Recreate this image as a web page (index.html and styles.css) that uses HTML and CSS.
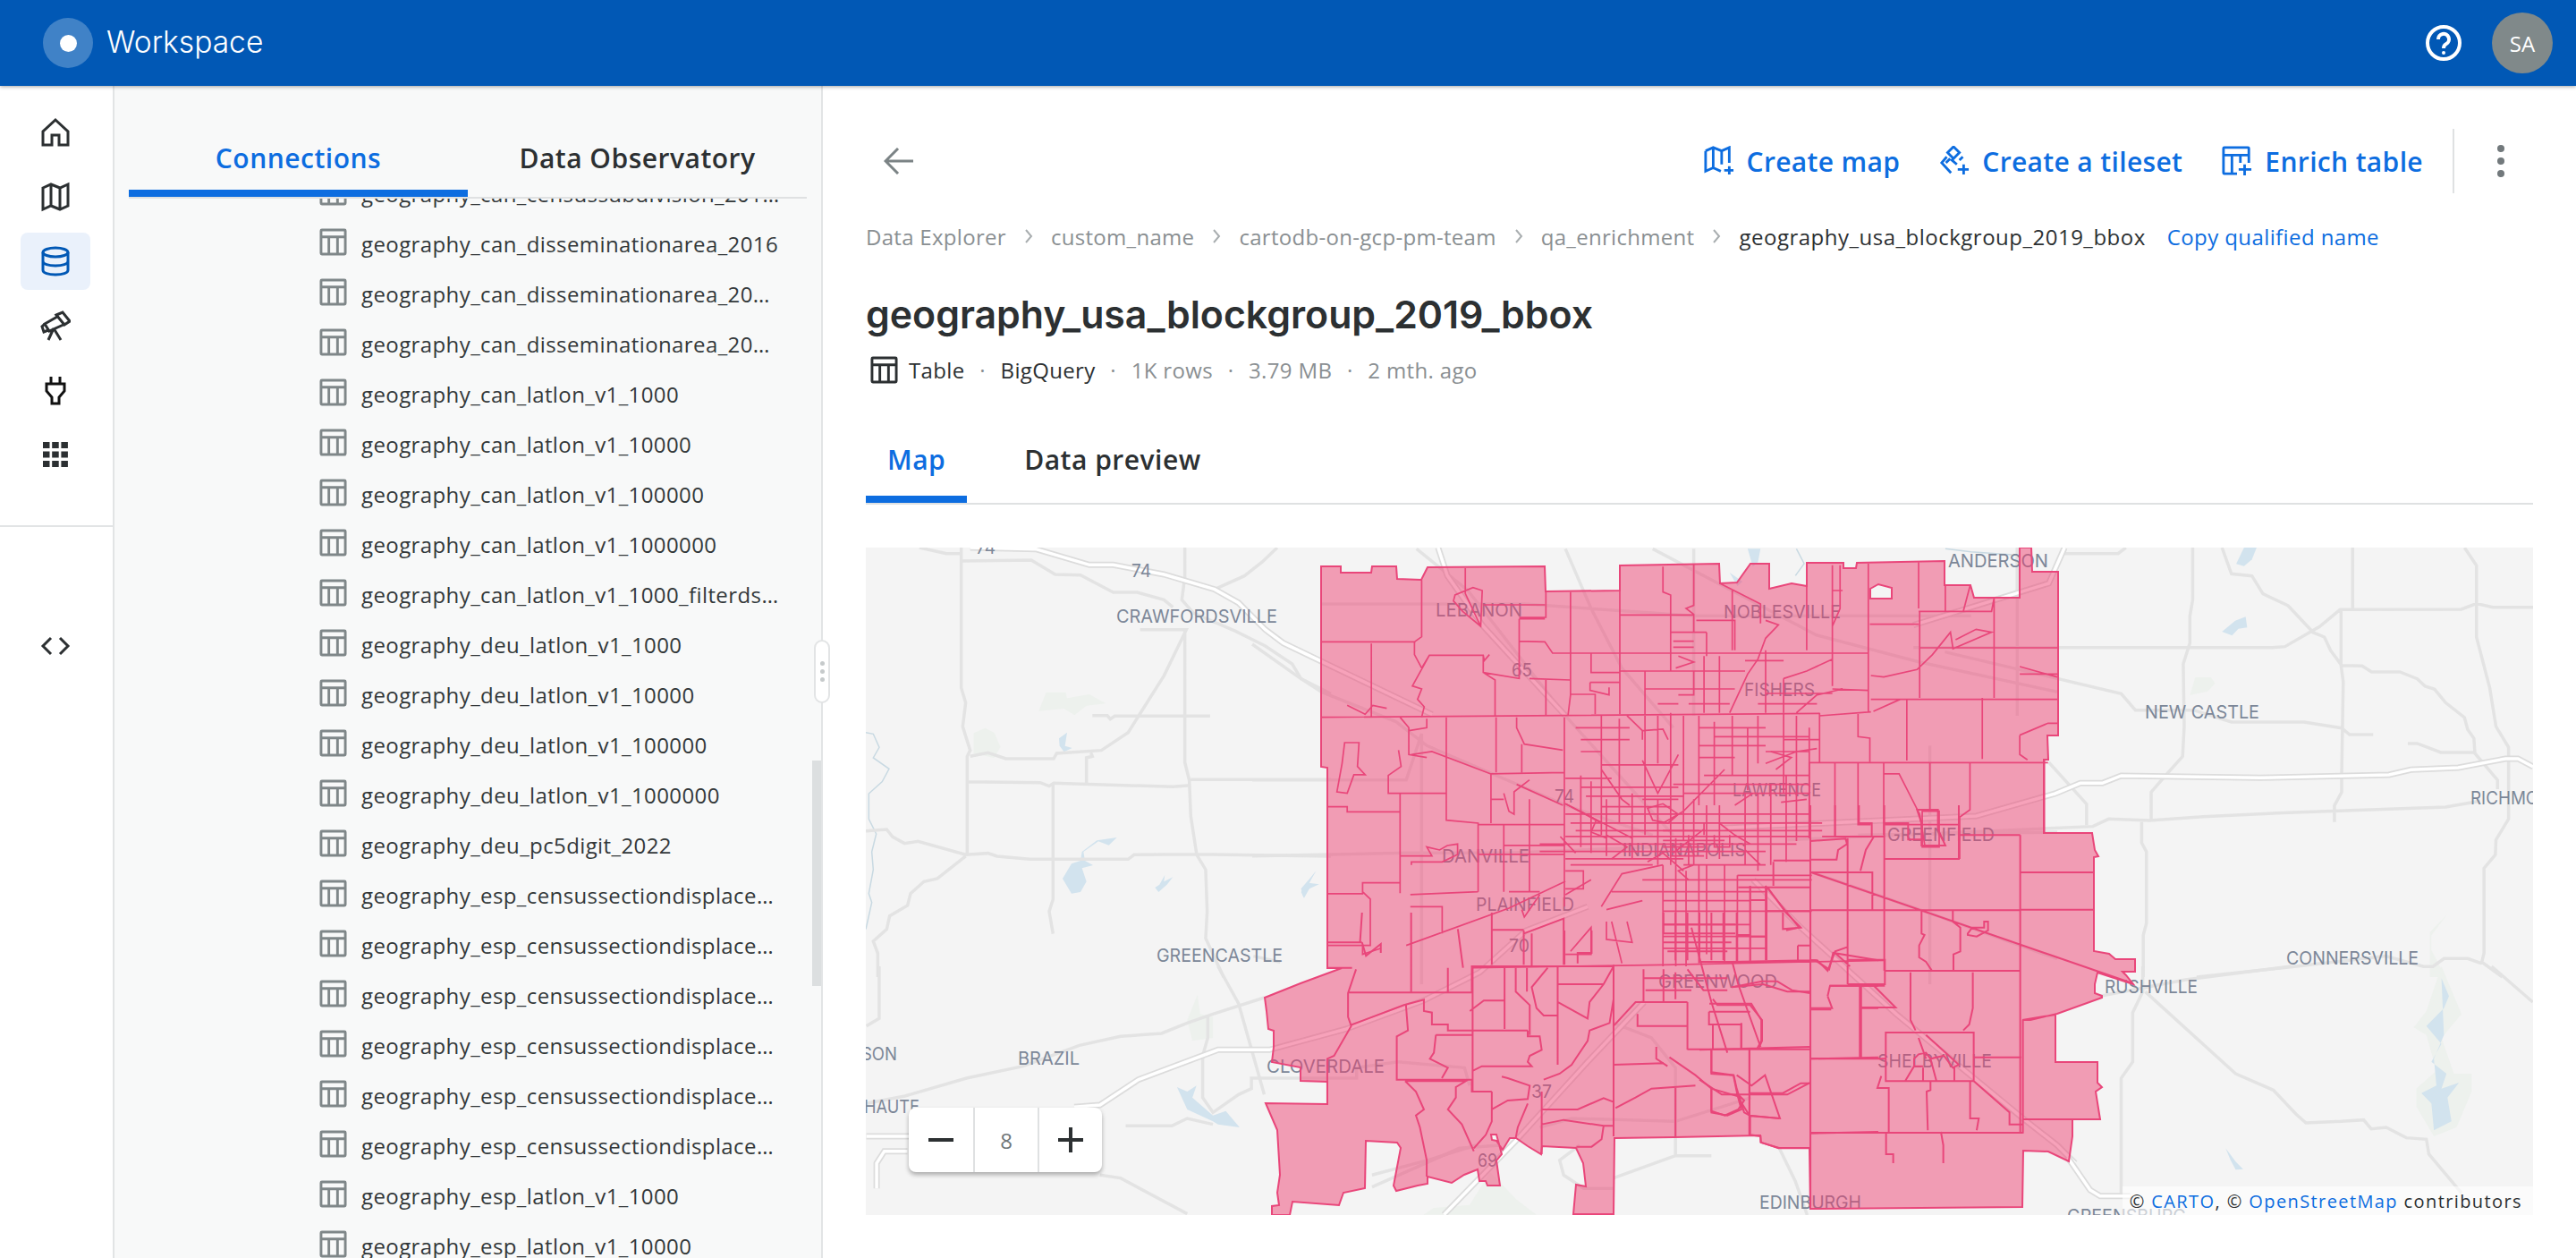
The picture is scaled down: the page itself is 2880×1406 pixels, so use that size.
FILE: index.html
```html
<!DOCTYPE html>
<html lang="en">

<head>
    <meta charset="UTF-8" />
    <title>Workspace :: Data Explorer</title>
    <link rel="stylesheet" href="styles.css">
</head>

<body>
    <svg class="defs" width="0" height="0">
        <symbol id="ic-table" viewBox="0 0 32 32">
            <path d="M3 2H29A1 1 0 0 1 30 3V29A1 1 0 0 1 29 30H3A1 1 0 0 1 2 29V3A1 1 0 0 1 3 2ZM2 10H30M11 10V30M21 10V30" />
        </symbol>
    </svg>

    <header class="top-header">
        <div class="logo"><span class="logo-dot"></span></div>
        <div class="app-name">Workspace</div>
        <div class="header-right">
            <svg class="help" viewBox="0 0 40 40">
                <circle cx="20" cy="20" r="18" />
                <path d="M14 16A6 6 0 1 1 23 21C21 22 20 23 20 26" />
                <circle class="help-dot" cx="20" cy="31" r="2" />
            </svg>
            <div class="avatar">SA</div>
        </div>
    </header>

    <div class="app">
        <nav class="rail">
            <div class="rail-main">
                <div class="rail-item">
                    <svg class="rail-icon" viewBox="0 0 34 34"><path d="M17 3L31 16V31H21V20H13V31H3V16Z" /></svg>
                </div>
                <div class="rail-item">
                    <svg class="rail-icon" viewBox="0 0 34 34"><path d="M3 7L12 3L22 7L31 3V27L22 31L12 27L3 31ZM12 3V27M22 7V31" /></svg>
                </div>
                <div class="rail-item active">
                    <svg class="rail-icon" viewBox="0 0 34 34"><ellipse cx="17" cy="7" rx="14" ry="5" /><path d="M3 7V27C3 30 9 32 17 32S31 30 31 27V7M3 17C3 20 9 22 17 22S31 20 31 17" /></svg>
                </div>
                <div class="rail-item">
                    <svg class="rail-icon" viewBox="0 0 34 34"><path d="M18 5L25 2L33 12L27 16ZM19 7L5 15L10 23L28 15M5 15L2 18L4 24L9 22M15 20L9 33M15 20L23 33" /></svg>
                </div>
                <div class="rail-item">
                    <svg class="rail-icon plug" viewBox="0 0 34 34"><path d="M12 2V10M22 2V10M7 10H27V18L21 25V32H13V25L7 18Z" /></svg>
                </div>
                <div class="rail-item">
                    <svg class="rail-icon grid-icon" viewBox="0 0 28 28">
                        <rect x="0" y="0" width="7.5" height="7" /><rect x="10.2" y="0" width="7.5" height="7" /><rect x="20.4" y="0" width="7.5" height="7" />
                        <rect x="0" y="10.5" width="7.5" height="7" /><rect x="10.2" y="10.5" width="7.5" height="7" /><rect x="20.4" y="10.5" width="7.5" height="7" />
                        <rect x="0" y="21" width="7.5" height="7" /><rect x="10.2" y="21" width="7.5" height="7" /><rect x="20.4" y="21" width="7.5" height="7" />
                    </svg>
                </div>
            </div>
            <div class="rail-bottom">
                <div class="rail-item">
                    <svg class="code-icon" viewBox="0 0 34 22"><path d="M12 2L3 11L12 20M22 2L31 11L22 20" /></svg>
                </div>
            </div>
        </nav>

        <aside class="sidebar">
            <div class="side-tabs">
                <div class="side-tab active">Connections</div>
                <div class="side-tab">Data Observatory</div>
            </div>
            <div class="side-list">
                <div class="rows">
                    <div class="row"><svg class="row-icon"><use href="#ic-table" /></svg><span class="row-name">geography_can_censussubdivision_2016_clipped</span></div>
                    <div class="row"><svg class="row-icon"><use href="#ic-table" /></svg><span class="row-name">geography_can_disseminationarea_2016</span></div>
                    <div class="row"><svg class="row-icon"><use href="#ic-table" /></svg><span class="row-name">geography_can_disseminationarea_2016_clipped</span></div>
                    <div class="row"><svg class="row-icon"><use href="#ic-table" /></svg><span class="row-name">geography_can_disseminationarea_2021_clipped</span></div>
                    <div class="row"><svg class="row-icon"><use href="#ic-table" /></svg><span class="row-name">geography_can_latlon_v1_1000</span></div>
                    <div class="row"><svg class="row-icon"><use href="#ic-table" /></svg><span class="row-name">geography_can_latlon_v1_10000</span></div>
                    <div class="row"><svg class="row-icon"><use href="#ic-table" /></svg><span class="row-name">geography_can_latlon_v1_100000</span></div>
                    <div class="row"><svg class="row-icon"><use href="#ic-table" /></svg><span class="row-name">geography_can_latlon_v1_1000000</span></div>
                    <div class="row"><svg class="row-icon"><use href="#ic-table" /></svg><span class="row-name">geography_can_latlon_v1_1000_filterdsample</span></div>
                    <div class="row"><svg class="row-icon"><use href="#ic-table" /></svg><span class="row-name">geography_deu_latlon_v1_1000</span></div>
                    <div class="row"><svg class="row-icon"><use href="#ic-table" /></svg><span class="row-name">geography_deu_latlon_v1_10000</span></div>
                    <div class="row"><svg class="row-icon"><use href="#ic-table" /></svg><span class="row-name">geography_deu_latlon_v1_100000</span></div>
                    <div class="row"><svg class="row-icon"><use href="#ic-table" /></svg><span class="row-name">geography_deu_latlon_v1_1000000</span></div>
                    <div class="row"><svg class="row-icon"><use href="#ic-table" /></svg><span class="row-name">geography_deu_pc5digit_2022</span></div>
                    <div class="row"><svg class="row-icon"><use href="#ic-table" /></svg><span class="row-name">geography_esp_censussectiondisplaced_2001_a</span></div>
                    <div class="row"><svg class="row-icon"><use href="#ic-table" /></svg><span class="row-name">geography_esp_censussectiondisplaced_2011_b</span></div>
                    <div class="row"><svg class="row-icon"><use href="#ic-table" /></svg><span class="row-name">geography_esp_censussectiondisplaced_2011_c</span></div>
                    <div class="row"><svg class="row-icon"><use href="#ic-table" /></svg><span class="row-name">geography_esp_censussectiondisplaced_2020_d</span></div>
                    <div class="row"><svg class="row-icon"><use href="#ic-table" /></svg><span class="row-name">geography_esp_censussectiondisplaced_2020_e</span></div>
                    <div class="row"><svg class="row-icon"><use href="#ic-table" /></svg><span class="row-name">geography_esp_censussectiondisplaced_2021_f</span></div>
                    <div class="row"><svg class="row-icon"><use href="#ic-table" /></svg><span class="row-name">geography_esp_latlon_v1_1000</span></div>
                    <div class="row"><svg class="row-icon"><use href="#ic-table" /></svg><span class="row-name">geography_esp_latlon_v1_10000</span></div>
                </div>
            </div>
            <div class="side-scroll"></div>
            <div class="resizer"><span></span><span></span><span></span></div>
        </aside>

        <main class="main">
            <div class="main-top">
                <svg class="back" viewBox="0 0 34 30"><path d="M33 15H3M16 1L2 15L16 29" /></svg>
                <div class="actions">
                    <div class="action">
                        <svg class="action-icon" viewBox="0 0 36 36"><path d="M2 6L11 2L21 6L30 2V20M2 6V30L11 26L20 30M11 2V26M21 6V22M30 24V34M24 29H35" /></svg>
                        Create map
                    </div>
                    <div class="action">
                        <svg class="action-icon" viewBox="0 0 36 36"><path d="M17 1L24 8L17 15L10 8ZM9 13L3 20L14 32M14 16L21 22M28 13L24 17M29 22V34M22 28H35M8 20L13 15" /></svg>
                        Create a tileset
                    </div>
                    <div class="action">
                        <svg class="action-icon" viewBox="0 0 36 36"><path d="M18 33H3A1 1 0 0 1 2 32V3A1 1 0 0 1 3 2H31A1 1 0 0 1 32 3V20M2 11H32M12 11V33M22 11V20M27 22V35M20 28H35" /></svg>
                        Enrich table
                    </div>
                    <div class="actions-sep"></div>
                    <div class="more"><span></span><span></span><span></span></div>
                </div>
            </div>

            <div class="crumbs">
                <span class="crumb">Data Explorer</span>
                <svg class="crumb-sep" viewBox="0 0 10 18"><path d="M2 2L8 9L2 16" /></svg>
                <span class="crumb">custom_name</span>
                <svg class="crumb-sep" viewBox="0 0 10 18"><path d="M2 2L8 9L2 16" /></svg>
                <span class="crumb">cartodb-on-gcp-pm-team</span>
                <svg class="crumb-sep" viewBox="0 0 10 18"><path d="M2 2L8 9L2 16" /></svg>
                <span class="crumb">qa_enrichment</span>
                <svg class="crumb-sep" viewBox="0 0 10 18"><path d="M2 2L8 9L2 16" /></svg>
                <span class="crumb current">geography_usa_blockgroup_2019_bbox</span>
                <span class="copy-name">Copy qualified name</span>
            </div>

            <h1 class="title">geography_usa_blockgroup_2019_bbox</h1>

            <div class="meta">
                <svg class="meta-icon"><use href="#ic-table" /></svg>
                <span class="meta-dark">Table</span><span class="meta-dot">·</span>
                <span class="meta-dark">BigQuery</span><span class="meta-dot">·</span>
                <span>1K rows</span><span class="meta-dot">·</span>
                <span>3.79 MB</span><span class="meta-dot">·</span>
                <span>2 mth. ago</span>
            </div>

            <div class="tabs">
                <div class="tab active">Map</div>
                <div class="tab">Data preview</div>
            </div>

            <div class="map-box">
                <svg class="map" viewBox="968 612 1864 746" width="1864" height="746">
                    <!-- green + water -->
                    <g transform="translate(968 612) scale(.3333)">
                        <path class="park" d="M605 485H670L675 505L750 492L805 523L740 530L700 562L665 540L580 548Z" />
                        <path class="park" d="M362 622L400 605L430 620L452 668L430 705L362 690Z" />
                        <path class="lake" d="M648 640L675 620L668 665L692 672L665 685L650 665Z" />
                        <path class="lake" d="M842 972L815 998L780 985L730 1020L735 1050L762 1065L725 1075L740 1120L720 1155L690 1160L660 1110L690 1060L720 1050L725 1020L775 982Z" />
                        <path class="lake" d="M1030 1105L1000 1120L1003 1098L985 1130L970 1140L982 1155L1010 1130Z" />
                        <path class="lake" d="M1508 1085L1485 1130L1520 1128L1490 1140L1470 1175L1460 1155Z" />
                        <path class="river" d="M0 620L25 625L45 670L25 705L78 742L55 785L10 825V910L35 960L20 1020L25 1080L10 1160L20 1190L0 1280" />
                    </g>
                    <g transform="translate(2280 612) scale(.3521 .3333)">
                        <path class="park" d="M495 435H545L558 455L535 482L478 495Z" />
                        <path class="park" d="M1295 1230L1245 1300V1350L1290 1440L1240 1440V1290Z" />
                        <path class="lake" d="M580 282L622 245L655 232L660 268L632 272L612 295Z" />
                        <path class="lake" d="M625 55L650 0H690L675 40L650 62Z" />
                    </g>
                    <g transform="translate(2000 1080) scale(.5612 .3333)">
                        <path class="park" d="M1300 0L1340 160L1300 240L1325 360H1360V420L1330 540L1285 570L1250 470V410L1290 350L1270 230L1245 205L1270 150Z" />
                        <path class="lake" d="M1300 40L1315 100L1305 140L1270 200L1300 260L1280 320L1310 360L1300 410L1335 390L1312 440L1320 520L1285 550L1280 460L1260 425L1290 400L1285 310L1305 230Z" />
                        <path class="lake" d="M870 610L890 655L905 680L890 682L880 650Z" />
                    </g>
                    <g transform="translate(960 1080) scale(.574 .3333)">
                        <path class="park" d="M640 180L660 95L665 160L690 170V240L650 250Z" />
                        <path class="lake" d="M620 405L640 420L658 400L650 440L690 500L715 485L742 540L700 530L690 520L640 480Z" />
                        <path class="park" d="M1100 833L1120 810L1190 800L1230 690L1280 780L1320 833Z" />
                    </g>
                    <g transform="translate(1400 600) scale(.574 .3333)">
                        <path class="lake" d="M965 40L990 40L985 85L975 100ZM930 120L955 150L945 165Z" />
                        <path class="river" d="M1060 40L1075 90L1058 130M1350 40L1400 50L1480 60" />
                        <path class="lake" d="M125 1120L110 1160L130 1165L105 1185L100 1210L95 1180Z" />
                    </g>

                    <!-- roads -->
                    <g class="roads" transform="translate(968 612) scale(.3333)">
                        <path d="M180 0L270 20H320M320 0V470L335 520L325 600L350 680L340 700V1030M320 45L555 42L635 90L720 92L830 150H910L1000 175L1030 200M1070 0V100L1060 175L1100 220L1240 280L1340 330L1430 390L1460 440L1560 490M1070 270V720L1085 780L1090 900L1110 1030L1140 1080L1145 1220L1140 1310L1200 1440M920 275H1075L1000 430L880 620L790 680L640 690L630 708H470L410 688L350 700M760 563H810L820 575L835 565H1155M740 790V705L760 700L755 688M335 785L585 788L615 800L630 790L1030 802L1090 797M1090 778H1560M628 790V1180L615 1220L628 1295M0 950L70 945L90 970L130 992L175 985L335 1030L410 1025L440 1035L550 1045H880L900 1030L1110 1028L1560 1035M335 1035L240 1110L195 1120L150 1160L140 1200L80 1235L70 1280L25 1320L40 1360V1440M1380 0L1330 48L1270 95L1170 140M1300 1370L1390 1390" />
                    </g>
                    <g class="roads" transform="translate(2280 612) scale(.3521 .3333)">
                        <path d="M80 20H250L275 0M487 0V175L478 230V320L457 390L460 600L455 700L400 765L355 820V915M580 0L610 88L675 95L710 155L790 195L870 285L905 300L925 345L960 395L1025 397L1055 417H1145L1200 440L1225 465L1255 475L1290 520L1350 570L1360 610L1380 640L1383 690L1455 780V810M995 0V205M-400 335H740L780 332L890 265L955 208L1340 207L1388 188L1440 200H1568M1350 0L1388 60V300L1430 470L1450 600L1490 670V910L1450 980L1448 1030L1412 1075V1360L1405 1390L1470 1440M958 208V395L965 450L960 760V820L937 865V920M-300 350L260 490L305 545H490L610 585H840L960 605L985 627H1060M1170 657H1200L1275 687H1380M-800 980L170 935L220 910L350 915L520 902L810 888L1290 870L1400 850M150 930V860L30 720M325 920V990L340 1020V1260L330 1300V1440M500 1440L810 1405L1100 1370L1220 1405H1250L1285 1378H1360L1405 1395" />
                    </g>
                    <g class="roads" transform="translate(2000 1080) scale(.5612 .3333)">
                        <path d="M705 0V85L685 155V320L662 375V760M710 85L890 360L965 415L1010 495L1030 525L1100 520L1145 515L1160 545L1190 540L1230 575L1270 580L1275 630L1340 760M1000 0L790 45L620 100M1400 0L1482 120" />
                    </g>
                    <g class="roads" transform="translate(960 1080) scale(.574 .3333)">
                        <path d="M40 0V175L15 200M15 460L90 435L210 375L320 335L430 265L510 235L590 225L640 190L690 160L790 105M700 0L740 125L790 430M680 170V240L670 300V440L690 490L740 430L765 410V375H970V340L1050 320L1180 340L1190 400M520 535H610L640 510L690 530M470 700L510 710L640 830M1000 740L1170 610L1250 600" />
                    </g>
                    <g class="roads" transform="translate(1400 600) scale(.574 .3333)">
                        <path d="M0 360L90 470L135 520L280 620L340 700L610 900L780 1000M320 40L420 180L610 600L820 1000M780 40L1000 240L1100 330L1300 420L1568 520M610 40L660 240L720 440L820 640M1490 0V600M860 40V600M135 225H530L860 265H1400M0 815H300L330 660V1500M0 1070L300 1060H500L780 1040M1180 1000L1568 990M1090 1125L1300 1250L1568 1415M1320 700V1500" />
                    </g>
                    <g class="roads" transform="translate(1400 1020) scale(.4464 .3333)">
                        <path d="M905 370L1000 420L1060 520V815H1150M905 890L1060 815M300 880L440 830L560 780M720 720L800 690L1060 700L1250 620M1320 790L1360 900L1390 1014M820 780L770 830L780 880L830 925L905 925" />
                    </g>
                    <g class="highway">
                        <g transform="translate(968 612) scale(.3333)">
                            <path class="case" d="M350 0L570 5L750 58H830L1000 90L1170 140L1250 185L1340 275L1400 320L1900 560" />
                            <path class="fill" d="M350 0L570 5L750 58H830L1000 90L1170 140L1250 185L1340 275L1400 320L1900 560" />
                        </g>
                        <g transform="translate(2280 612) scale(.3521 .3333)">
                            <path class="case" d="M-1000 940L-200 900L0 840L50 825L130 790H200L260 765L700 772L1110 762L1180 745L1330 738L1480 708H1520L1568 735" />
                            <path class="fill" d="M-1000 940L-200 900L0 840L50 825L130 790H200L260 765L700 772L1110 762L1180 745L1330 738L1480 708H1520L1568 735" />
                            <path class="case" d="M80 0L30 120L-400 260" />
                            <path class="fill" d="M80 0L30 120L-400 260" />
                        </g>
                        <g transform="translate(960 1080) scale(.574 .3333)">
                            <path class="case" d="M420 472L470 465L545 380L700 280H800L950 210L1100 115L1210 20L1300 -120L1420 -200" />
                            <path class="fill" d="M420 472L470 465L545 380L700 280H800L950 210L1100 115L1210 20L1300 -120L1420 -200" />
                            <path class="case" d="M15 570H100M95 620H50L35 660V745" />
                            <path class="fill" d="M15 570H100M95 620H50L35 660V745" />
                            <path class="case" d="M1140 833L1280 585L1420 320L1530 120" />
                            <path class="fill" d="M1140 833L1280 585L1420 320L1530 120" />
                        </g>
                        <g transform="translate(1900 900) scale(.3333)">
                            <path class="case" d="M180 250L340 410L660 700L1085 1050L1200 1140L1260 1200" />
                            <path class="fill" d="M180 250L340 410L660 700L1085 1050L1200 1140L1260 1200" />
                        </g>
                        <g transform="translate(2000 1080) scale(.5612 .3333)">
                            <path class="case" d="M555 640L600 750L620 770H680" />
                            <path class="fill" d="M555 640L600 750L620 770H680" />
                        </g>
                        <g transform="translate(1400 600) scale(.574 .3333)">
                            <path class="case" d="M362 36L380 130L450 300L610 600" />
                            <path class="fill" d="M362 36L380 130L450 300L610 600" />
                        </g>
                    </g>

                    <!-- labels -->
                    <g class="labels">
                        <text x="1091" y="619" textLength="22" lengthAdjust="spacingAndGlyphs">74</text>
                        <text x="1265" y="645" textLength="22" lengthAdjust="spacingAndGlyphs">74</text>
                        <text x="1248" y="696" textLength="180" lengthAdjust="spacingAndGlyphs">CRAWFORDSVILLE</text>
                        <text x="1293" y="1075" textLength="141" lengthAdjust="spacingAndGlyphs">GREENCASTLE</text>
                        <text x="2398" y="803" textLength="128" lengthAdjust="spacingAndGlyphs">NEW CASTLE</text>
                        <text x="2762" y="899" textLength="104" lengthAdjust="spacingAndGlyphs">RICHMOND</text>
                        <text x="2556" y="1078" textLength="148" lengthAdjust="spacingAndGlyphs">CONNERSVILLE</text>
                        <text x="2178" y="634" textLength="112" lengthAdjust="spacingAndGlyphs">ANDERSON</text>
                        <text x="1605" y="689" textLength="97" lengthAdjust="spacingAndGlyphs">LEBANON</text>
                        <text x="1927" y="691" textLength="131" lengthAdjust="spacingAndGlyphs">NOBLESVILLE</text>
                        <text x="1690" y="756" textLength="23" lengthAdjust="spacingAndGlyphs">65</text>
                        <text x="1950" y="778" textLength="79" lengthAdjust="spacingAndGlyphs">FISHERS</text>
                        <text x="1937" y="890" textLength="99" lengthAdjust="spacingAndGlyphs">LAWRENCE</text>
                        <text x="1738" y="897" textLength="22" lengthAdjust="spacingAndGlyphs">74</text>
                        <text x="2110" y="940" textLength="120" lengthAdjust="spacingAndGlyphs">GREENFIELD</text>
                        <text x="1814" y="957" textLength="138" lengthAdjust="spacingAndGlyphs">INDIANAPOLIS</text>
                        <text x="1612" y="964" textLength="98" lengthAdjust="spacingAndGlyphs">DANVILLE</text>
                        <text x="1650" y="1018" textLength="110" lengthAdjust="spacingAndGlyphs">PLAINFIELD</text>
                        <text x="1687" y="1064" textLength="23" lengthAdjust="spacingAndGlyphs">70</text>
                        <text x="1854" y="1104" textLength="133" lengthAdjust="spacingAndGlyphs">GREENWOOD</text>
                        <text x="1416" y="1199" textLength="132" lengthAdjust="spacingAndGlyphs">CLOVERDALE</text>
                        <text x="1138" y="1190" textLength="69" lengthAdjust="spacingAndGlyphs">BRAZIL</text>
                        <text x="958" y="1185" textLength="45" lengthAdjust="spacingAndGlyphs">ISON</text>
                        <text x="966" y="1244" textLength="62" lengthAdjust="spacingAndGlyphs">HAUTE</text>
                        <text x="1712" y="1227" textLength="23" lengthAdjust="spacingAndGlyphs">37</text>
                        <text x="1652" y="1304" textLength="22" lengthAdjust="spacingAndGlyphs">69</text>
                        <text x="2099" y="1193" textLength="128" lengthAdjust="spacingAndGlyphs">SHELBYVILLE</text>
                        <text x="2353" y="1110" textLength="104" lengthAdjust="spacingAndGlyphs">RUSHVILLE</text>
                        <text x="1967" y="1351" textLength="114" lengthAdjust="spacingAndGlyphs">EDINBURGH</text>
                        <text x="2311" y="1366" textLength="133" lengthAdjust="spacingAndGlyphs">GREENSBURG</text>
                    </g>

                    <!-- block groups -->
                    <path class="tract-fill" fill-rule="evenodd" d="M1477 633L1499 633L1499 640L1533 640L1534 633L1561 633L1562 647L1589 648L1596 634L1727 633L1728 661L1811 660L1811 632L1922 630L1923 652L1942 651L1957 630L1978 630L1978 658L2003 652L2020 655L2020 629L2061 629L2061 635L2075 635L2076 629L2174 627L2174 654L2203 654L2207 668L2258 668L2258 612L2271 612L2272 639L2301 639L2301 822L2289 822L2290 849L2285 849L2285 931L2339 931L2342 950L2346 957L2341 958L2341 1063L2358 1066L2365 1072L2387 1072L2387 1086L2373 1086L2377 1090L2385 1100L2345 1087L2342 1100L2342 1110L2350 1113L2350 1115L2300 1133L2270 1140L2261 1140L2298 1134L2298 1187L2345 1187L2345 1210L2350 1215L2343 1220L2347 1245L2348 1251L2317 1251L2317 1270L2313 1298L2290 1287L2262 1286L2261 1349L2024 1351L2023 1283L1989 1283L1969 1277L1968 1269L1872 1271L1805 1272L1804 1357L1759 1357L1762 1324L1773 1326L1770 1300L1762 1283L1724 1281L1723 1290L1708 1281L1695 1272L1688 1272L1680 1285L1673 1275L1668 1274L1667 1268L1673 1268L1679 1290L1673 1297L1677 1325L1663 1325L1661 1320L1654 1320L1652 1307L1637 1313L1623 1322L1596 1315L1596 1323L1585 1325L1561 1331L1558 1325L1566 1283L1562 1277L1527 1275L1526 1328L1502 1333L1497 1347L1445 1343L1442 1358L1422 1358L1422 1348L1430 1347L1428 1333L1431 1313L1428 1263L1415 1233L1484 1234L1484 1209L1454 1208L1454 1193L1422 1187L1424 1170L1424 1152L1418 1150L1416 1130L1414 1115L1454 1099L1500 1082L1484 1082L1484 858L1477 857ZM2091 658L2100 653L2115 657L2115 669L2091 669Z" />

                    <g class="tracts thin" transform="translate(1400 600) scale(.574 .3333)">
                        <!-- north -->
                        <path d="M135 352H318M232 358V605M330 145V335L316 352V395L330 440L345 397H450L452 415L462 395M345 397L312 500L330 510L322 545L335 570L330 605M450 397V455L473 480V600M520 275V350L570 352L585 390H1200M520 275H570M570 228H450M415 105V190L445 300M392 215L410 250L445 300L448 180L430 170L395 195ZM572 185V270H520M620 185V530L615 600M540 475L620 480M520 352V475L450 455M572 480V600M620 528H668V595M660 390V455H716M658 488H716V595M658 488V515L695 530V505M716 95V580M800 100V185L815 195V262M716 262H860M860 90V230L845 240L860 260V320M815 265V450M885 320H815M885 320V400M865 280H940V380M935 180V380M910 155L990 225V290M1000 280L1025 295L1000 340L985 410L965 460L930 590M1080 165V380M1130 95V500M1150 180H1130M1145 95V240L1130 300M1200 90V590M1298 85V240M1203 293H1298M1300 250V540M1298 250H1440L1445 205M1350 250V165M1385 250L1398 165M1445 205V540M1205 465L1230 470L1295 445L1325 395L1360 320L1365 375L1440 320L1410 310L1370 345M1035 475L1080 450L1130 410M1035 475V590M1205 545L1265 545H1568M1210 585L1262 545M1275 545V750M1422 540V745M1180 592V670L1203 675V755M1105 600L1205 587M1495 460H1568M1495 435L1568 470M1300 372H1568M1495 665L1550 625H1568M1495 665V730L1510 748" />
                        <path d="M135 605L1105 592M715 450H960M765 450V600M765 510H940M860 450V530H830M820 350H860M820 370H860M830 400L860 420L825 440M880 400V590M910 400V590M1000 380V590M1000 525H1130M1130 510L1200 515M1060 590L1100 530L1150 510M960 415H1035M985 560H1100M850 560H930M790 560H830" />
                        <!-- east of the core -->
                        <path d="M1085 757H1550M1105 590V755M1085 757V1010M1135 760V1005M1180 760V965L1205 965M1230 755V1000M1230 795H1260L1300 930L1310 1035M1320 755V915M1398 755V915L1378 940V1080M1543 750V995M1305 920H1338V1040H1305ZM1232 965H1375M1232 1080H1378M1110 1005H1232" />
                        <!-- west -->
                        <path d="M288 605L305 640V730L340 740M378 605V860M475 605V790M515 605V640L530 695L605 715M525 695V790M608 605V1240M340 610V640L305 650M285 715L290 770L265 800V860H378M288 860V1195M147 905H185V922H288M378 860V950L440 960V1190M310 730L350 720L465 795V960M465 795L608 790M440 965H608M490 965V1190M540 880V1190M465 880H490M490 860L500 920L510 930V855L540 815M515 830L605 900M610 895L680 960M440 1190L308 1200M146 1197H215V1160H288M215 1160V1190L230 1215V1370H146M215 1370V1400L250 1380M308 1240H370V1330M180 690H208L205 770L220 798H198L185 860L165 855L175 760ZM185 565L220 595L235 565L262 575M288 1070H350L340 1040L365 1050L380 1035L400 1030V1065L370 1090H310V1100M440 1065H608M490 1035H608M610 1120H645V1180H610M500 1190H560M525 1250L530 1275L560 1200M610 1155L500 1245L300 1370" />
                        <!-- core grid -->
                        <path d="M680 600V1000M715 610V960M765 600V1000M790 600V760M815 590V1000M840 600V1020M870 600V900M900 620V900M935 600V800M965 640V850M985 600V760M1035 590V860M1060 600V830M1085 640V1010M630 640H735M640 680H735M640 720H680M680 765H830M610 810H700M640 840H830M650 870H840M680 905H815M730 600L760 650V680M760 650L800 645L810 680M870 640H1000M900 670H1085M870 700H1000M870 740H940M1000 720H1085M1035 680H1105M1000 760L1060 720L1100 710M880 800H1085M820 830H1085M840 860H1085M920 780L840 920L800 960M830 730L790 860L760 750M610 895L740 1010M680 780L720 880L735 900" />
                        <path d="M640 800V1040M660 820V1060M690 880V1070M740 860V1080M790 880V1100M860 880V1090M885 900V1080M910 900V1080M960 860V1100M985 860V1120M1010 830V1100M1040 800V1090M1060 830V1020M610 930H1085M620 960H1110M630 985H1110M610 1005H1085M560 1030H1060M560 1055H1000M610 1080H840M620 1100H780M840 1100H1000M880 980L820 1060M960 1050L990 1100M800 1040H880M830 960H880V1000M860 1060V1100L830 1120L850 1150M900 1000V1040H930V1000" />
                        <path d="M760 880H830M770 910L800 895L830 930L810 960L780 950ZM815 1000V1100M825 1010V1100M850 1000V1100M800 985H870M800 1018H920M815 1070H880M690 1000L730 1040L700 1080M600 1005L630 1060M640 920L670 950L660 990L690 1010M1030 890L1080 880M1020 780L1050 740L1010 720M940 900L975 860M910 960L940 1000L970 1030M770 1090L800 1060L840 1120" />
                        <!-- south of the core -->
                        <path d="M800 1100V1440M825 1100V1440M845 1120V1440M870 1100V1430M885 1100V1400M920 1100V1430M945 1135V1430M970 1180V1420M1000 1170V1420M1087 1005V1440M760 1150H1090M700 1190H1000M800 1220H970M800 1255H1090M800 1300H970M800 1340H1000M800 1380H1000M680 1240L720 1130L800 1100M690 1250L760 1220M690 1290V1350L740 1360L730 1290M1000 1170L1065 1310L1040 1320M945 1135H1090M660 1150L610 1200M700 1290L720 1430" />
                        <path d="M430 1445L800 1435L1230 1420M620 1390L660 1310V1400H610" />
                    </g>

                    <g class="tracts" transform="translate(1900 900) scale(.3333)">
                        <path d="M372 0V1200M372 352H1076M620 0V555M1076 100V1100M375 225L1455 598M620 180H870V0M870 100H1076M1076 225H1320M1076 350H1325M497 110V350M497 225H375M497 225V600M497 225H580V350M372 182H460L465 150L495 130L490 112L372 120M540 220L558 150L585 105M455 0V105H620M535 0V60H578V105M620 60H700V115H745V135H825L800 80V15H730L745 60V115M745 350V430L755 435L737 470V510L760 525L780 555M850 350V390L875 410V490L852 500V555M622 555H1076M497 518H622V600H497M497 475L455 490L440 530L430 555L395 520H372M455 495L505 540M438 605H622M430 640L445 680H372M430 640L438 605M538 605V845M538 678H658L580 600M708 560V720L725 755M917 560V680L905 735L885 755M372 850H625M625 762H920V925H625ZM920 845H1080M1085 720V1100M735 780L760 850M760 770L870 870L850 880L820 840L775 850L760 830L735 835L720 850V875L690 925M750 880V925M775 850L795 925M855 880V925M720 875H750M610 908L597 948H635V1095M775 925V955L762 960L766 1090M908 925V1050H937L930 1090M920 925L1040 1030V1070H1085M372 1098H1085M626 1095V1170H650V1200M810 1095L818 1140V1200M1085 1053H1345M900 430L915 410H955V390H968V420L930 440L900 435Z" />
                        <path d="M0 525H372M0 820L372 810M168 815V1110M170 270V525M225 275V520M130 275H370M248 190V270M248 185H370M228 275L290 360L340 410L280 415V360M225 355H372M330 470V520M330 470H372M170 318H225M170 440H225M125 360V525M125 435H170M110 525L130 600L205 810M45 650L60 670H170L210 720V790L200 812M32 692V735H140V815M45 735V820M32 692H170M260 590L310 620L370 630M110 610L210 590H260M40 820V900L115 905L125 950L150 1030L172 1042L270 1050L220 905L175 940L125 905M40 950V1025L85 1040L130 1020L150 990L125 965M170 965H280L340 932H372M0 920L75 970H170M170 1040V1105L205 1110V1130L265 1150H372" />
                    </g>

                    <g class="tracts" transform="translate(1400 1020) scale(.4464 .3333)">
                        <path d="M188 100H275M275 0L270 100M275 100L285 145L322 105V135M188 185H250M260 190L240 270V350L248 380L205 480L188 490V640M245 378L380 310L430 292V330L450 335V375H490V395H550M385 310L390 395L362 415V560H550V600H600M240 268H550V180H905M398 0V268M515 55L528 185M490 185V268M552 180V600M632 185V390M552 395H690M545 330L580 295H632M600 0V175M600 58H680M680 60V175M680 70L780 20V175M700 70V180M782 60V175M815 170V135H850V60M660 185V265L695 310V410M688 185V265M740 185L700 250L712 320L730 345H765M765 180V510M765 240H880M765 300L840 355L845 300L880 240L905 180M905 175V750M905 290L895 370L845 395L840 430L810 490L800 510L770 540L730 560M690 395V415H720L725 460L695 480L690 500L700 515H575L553 530M460 410H552M460 410L455 470L445 490L490 520L475 555M383 565H535L510 585V620L490 660L525 710L555 800M383 565L410 600L430 660L410 680L420 720L437 830V885M600 600V700L585 745L555 790M625 550L640 555L695 580L690 625L640 630L600 660M690 640L665 720L660 755M725 600V810M725 660H815L880 622L905 635M725 710L780 695L880 715H905M880 715L875 760L850 785H812" />
                        <path d="M905 510L1030 505M1012 450V490L1040 515M1045 485L1110 545L1150 590L1215 615L1245 680L1320 690M910 655L960 620L1000 590L1110 580M1060 585V750M1245 680V745M1150 590V670L1190 680L1225 660L1215 610M1150 460V535L1205 545L1215 610M1245 460V680M1090 458H1398M1225 370V455M1150 375H1225M1145 305H1250L1275 360V430L1265 455M1090 300V460M965 340V380H1090M1090 300H960L905 380M1398 0V985M1400 325H1450M1400 490L1568 485M1400 740L1568 735M1525 240V485M1445 245H1568M1525 320H1568M1400 160H1410L1445 190L1455 135L1568 160M1200 165L1398 160M1200 250L1280 240L1340 265H1398M1245 610H1340L1398 570M1100 50L1150 300L1190 470M1030 0V70M1060 0V160M1090 0V160M1120 0V160M1150 0V160M1180 0V160M1030 40H1210M1030 70H1210M1030 100H1200M1040 130H1190M980 190V300M1030 190V300M1060 200V290M1090 190L1130 260H1190M980 220H1190M985 260H1100" />
                    </g>
                </svg>

                <div class="zoom-ctl">
                    <div class="zoom-cell">
                        <svg class="zoom-icon" viewBox="0 0 28 28"><path d="M0 14H28" /></svg>
                    </div>
                    <div class="zoom-cell zoom-value">8</div>
                    <div class="zoom-cell">
                        <svg class="zoom-icon" viewBox="0 0 28 28"><path d="M0 14H28M14 0V28" /></svg>
                    </div>
                </div>
                <div class="attribution">© <a>CARTO</a>, © <a>OpenStreetMap</a> contributors</div>
            </div>
        </main>
    </div>
</body>

</html>
```

FILE: styles.css
```css
* {
    margin: 0;
    padding: 0;
    box-sizing: border-box;
}

body {
    height: 100vh;
    overflow: hidden;
    font-family: "Open Sans", "Liberation Sans", sans-serif;
    color: #2c3032;
    background-color: white;
    display: flex;
    flex-direction: column;
}

.defs {
    position: absolute;
}

/* header */
.top-header {
    background-color: #0158b5;
    height: 96px;
    flex: none;
    display: flex;
    align-items: center;
    padding-left: 48px;
    box-shadow: 0 1px 4px rgba(0, 0, 0, 0.35);
    position: relative;
    z-index: 2;
}

.logo {
    width: 56px;
    height: 56px;
    border-radius: 50%;
    background-color: rgba(255, 255, 255, 0.25);
    display: flex;
    justify-content: center;
    align-items: center;
}

.logo-dot {
    width: 19px;
    height: 19px;
    border-radius: 50%;
    background-color: white;
}

.app-name {
    color: white;
    font-family: Inter, sans-serif;
    font-weight: 300;
    font-size: 33.6px;
    margin-left: 15px;
    padding-bottom: 3px;
}

.header-right {
    margin-left: auto;
    margin-right: 26px;
    display: flex;
    align-items: center;
    gap: 34px;
}

.help {
    width: 40px;
    height: 40px;
    fill: none;
    stroke: white;
    stroke-width: 4;
}

.help .help-dot {
    fill: white;
    stroke: none;
}

.avatar {
    width: 68px;
    height: 68px;
    border-radius: 50%;
    background-color: #80898a;
    color: white;
    font-size: 24px;
    display: flex;
    justify-content: center;
    align-items: center;
}

.app {
    flex: 1;
    display: flex;
    min-height: 0;
}

/* left rail */
.rail {
    width: 128px;
    flex: none;
    border-right: 2px solid #e2e4e5;
    padding-top: 16px;
}

.rail-main {
    height: 477px;
    border-bottom: 2px solid #e2e4e5;
    padding-top: 4px;
}

.rail-item {
    width: 78px;
    height: 64px;
    margin: 0 0 8px 23px;
    border-radius: 8px;
    display: flex;
    justify-content: center;
    align-items: center;
}

.rail-item.active {
    background-color: #eaf1fb;
}

.rail-icon {
    width: 34px;
    height: 34px;
    fill: none;
    stroke: #2c3032;
    stroke-width: 3;
}

.rail-item.active .rail-icon {
    stroke: #0158b5;
}

.rail-icon.plug {
    stroke: #111;
}

.grid-icon {
    width: 28px;
    height: 28px;
    fill: #2c3032;
    stroke: none;
}

.rail-bottom {
    padding-top: 101px;
}

.code-icon {
    width: 34px;
    height: 22px;
    fill: none;
    stroke: #2c3032;
    stroke-width: 3;
}

/* connections panel */
.sidebar {
    width: 792px;
    flex: none;
    background-color: #f8f9f9;
    border-right: 2px solid #e2e4e5;
    display: flex;
    flex-direction: column;
    padding-left: 16px;
    position: relative;
}

.side-tabs {
    flex: none;
    width: 758px;
    height: 92px;
    margin-top: 34px;
    display: flex;
    border-bottom: 2px solid #dfe1e2;
}

.side-tab {
    width: 379px;
    height: 92px;
    font-size: 30px;
    font-weight: 600;
    letter-spacing: 0.5px;
    display: flex;
    justify-content: center;
    align-items: center;
    position: relative;
}

.side-tab.active {
    color: #0d6de0;
}

.side-tab.active::after {
    content: "";
    position: absolute;
    left: 0;
    right: 0;
    top: 82px;
    height: 8px;
    background-color: #0d6de0;
}

.side-list {
    flex: 1;
    overflow: hidden;
    min-height: 0;
}

.rows {
    margin-top: -34px;
    padding-left: 213px;
}

.row {
    height: 56px;
    display: flex;
    align-items: center;
    gap: 16px;
    font-size: 24px;
    letter-spacing: 0.4px;
}

.row-icon {
    width: 31px;
    height: 31px;
    flex: none;
    fill: none;
    stroke: #7f8789;
    stroke-width: 3;
    margin-top: -3px;
}

.row-name {
    max-width: 468px;
    white-space: nowrap;
    overflow: hidden;
    text-overflow: ellipsis;
    color: #33383a;
}

.side-scroll {
    position: absolute;
    right: 0;
    top: 754px;
    width: 10px;
    height: 252px;
    background-color: #dcdfe0;
}

.resizer {
    position: absolute;
    right: -10px;
    top: 619px;
    width: 18px;
    height: 71px;
    background-color: white;
    border: 2px solid #e2e4e5;
    border-radius: 9px;
    display: flex;
    flex-direction: column;
    justify-content: center;
    align-items: center;
    gap: 4px;
    z-index: 1;
}

.resizer span {
    width: 5px;
    height: 5px;
    border-radius: 50%;
    background-color: #c6cacb;
}

/* main */
.main {
    flex: 1;
    min-width: 0;
    padding: 48px 48px 0 48px;
}

.main-top {
    height: 72px;
    display: flex;
    align-items: center;
    justify-content: space-between;
}

.back {
    width: 34px;
    height: 30px;
    margin-left: 20px;
    fill: none;
    stroke: #7b8385;
    stroke-width: 3;
}

.actions {
    display: flex;
    align-items: center;
    height: 72px;
}

.action {
    display: flex;
    align-items: center;
    gap: 14px;
    color: #0d6de0;
    font-size: 30px;
    font-weight: 600;
    letter-spacing: 0.35px;
    margin-right: 44px;
}

.action-icon {
    width: 34px;
    height: 34px;
    fill: none;
    stroke: #0d6de0;
    stroke-width: 3;
}

.actions-sep {
    width: 2px;
    height: 72px;
    background-color: #dfe1e2;
    margin-left: -11px;
}

.more {
    margin-left: 48px;
    margin-right: 32px;
    display: flex;
    flex-direction: column;
    gap: 6px;
}

.more span {
    width: 8px;
    height: 8px;
    border-radius: 50%;
    background-color: #72797c;
}

.crumbs {
    height: 32px;
    margin-top: 32px;
    display: flex;
    align-items: center;
    font-size: 24px;
    letter-spacing: 0.3px;
    color: #8a8f92;
    white-space: nowrap;
}

.crumb-sep {
    width: 10px;
    height: 18px;
    margin: 0 20px;
    fill: none;
    stroke: #a9aeb0;
    stroke-width: 2;
}

.crumb.current {
    color: #2c3032;
    font-weight: 500;
    letter-spacing: 0.5px;
}

.copy-name {
    color: #0d6de0;
    margin-left: 24px;
    letter-spacing: 0.4px;
}

.title {
    height: 56px;
    line-height: 56px;
    margin-top: 44px;
    font-family: Inter, sans-serif;
    font-size: 42.8px;
    font-weight: 600;
}

.meta {
    height: 32px;
    margin-top: 17px;
    padding-left: 5px;
    display: flex;
    align-items: center;
    font-size: 24px;
    letter-spacing: 0.35px;
    color: #8a8f92;
}

.meta-icon {
    width: 31px;
    height: 31px;
    margin-right: 12px;
    fill: none;
    stroke: #2c3032;
    stroke-width: 3;
}

.meta-dark {
    color: #2c3032;
}

.meta-dot {
    width: 40px;
    text-align: center;
}

.tabs {
    height: 96px;
    margin-top: 39px;
    display: flex;
    border-bottom: 2px solid #dfe1e2;
}

.tab {
    height: 94px;
    padding: 0 24px 4px;
    margin-right: 40px;
    font-size: 30px;
    font-weight: 600;
    letter-spacing: 0.5px;
    display: flex;
    align-items: center;
    position: relative;
}

.tab.active {
    color: #0d6de0;
}

.tab.active::after {
    content: "";
    position: absolute;
    left: 0;
    right: 0;
    bottom: 0;
    height: 8px;
    background-color: #0d6de0;
}

/* map */
.map-box {
    width: 1864px;
    height: 746px;
    margin-top: 48px;
    position: relative;
    overflow: hidden;
    background-color: #f4f4f4;
}

.map {
    display: block;
}

.map path {
    vector-effect: non-scaling-stroke;
}

.park {
    fill: #edf1ed;
}

.lake {
    fill: #d2e3ee;
}

.river {
    fill: none;
    stroke: #c8d9e2;
    stroke-width: 1.5;
}

.roads {
    fill: none;
    stroke: #e3e3e3;
    stroke-width: 3.5;
}

.highway {
    fill: none;
}

.highway .case {
    stroke: #dcdcdc;
    stroke-width: 7;
}

.highway .fill {
    stroke: white;
    stroke-width: 3.5;
}

.labels text {
    font-family: Inter, sans-serif;
    font-size: 20px;
    fill: #7c8798;
}

.tract-fill {
    fill: rgba(238, 60, 110, 0.48);
    stroke: #e9467a;
    stroke-width: 2;
}

.tracts {
    fill: none;
    stroke: #e9467a;
    stroke-width: 2;
}

.tracts.thin {
    stroke-width: 1.7;
}

.zoom-ctl {
    position: absolute;
    left: 48px;
    top: 626px;
    height: 72px;
    display: flex;
    background-color: white;
    border-radius: 8px;
    box-shadow: 0 3px 5px rgba(0, 0, 0, 0.3);
}

.zoom-cell {
    width: 72px;
    height: 72px;
    display: flex;
    justify-content: center;
    align-items: center;
    border-left: 2px solid #dfe1e2;
}

.zoom-cell:first-child {
    border-left: none;
}

.zoom-value {
    font-size: 24px;
    color: #6f777a;
}

.zoom-icon {
    width: 28px;
    height: 28px;
    fill: none;
    stroke: #2c3032;
    stroke-width: 4;
}

.attribution {
    position: absolute;
    right: 0;
    bottom: 0;
    height: 32px;
    padding: 0 12px 0 8px;
    background-color: rgba(255, 255, 255, 0.6);
    font-size: 20px;
    letter-spacing: 1.4px;
    display: flex;
    align-items: center;
    white-space: pre;
}

.attribution a {
    color: #0d6de0;
}
```
